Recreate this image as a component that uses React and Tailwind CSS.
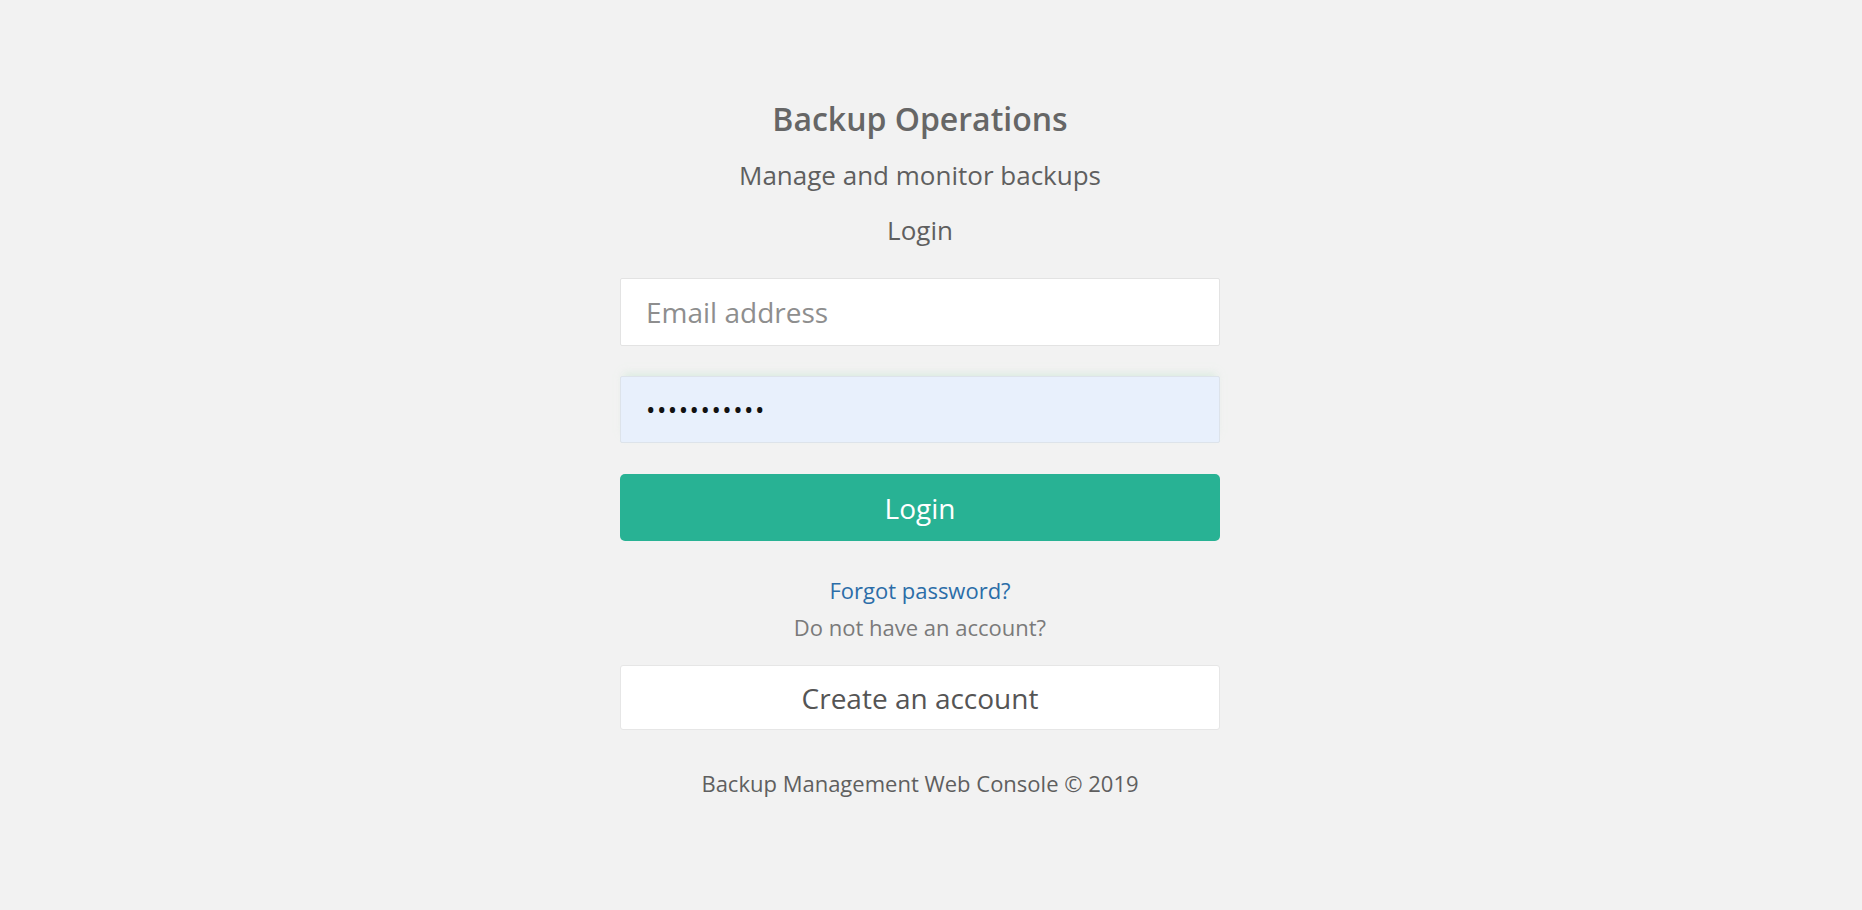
import React from "react";

export default function App() {
  return (
    <div
      className="min-h-[910px] w-full bg-[#f2f2f2]"
      style={{ fontFamily: '"Open Sans", "Noto Sans", sans-serif' }}
    >
      <div className="ml-[620px] w-[600px] flex flex-col items-center pt-[97px]">
        <h1 className="text-[32px] font-semibold text-[#666666] leading-[44px]">Backup Operations</h1>
        <p className="mt-[16px] text-[26px] text-[#5f5f5f] leading-[36px]">Manage and monitor backups</p>
        <p className="mt-[19px] text-[26px] text-[#5f5f5f] leading-[36px]">Login</p>

        <div className="mt-[30px] w-full h-[68px] bg-white border border-[#e3e3e3] rounded-[2px] flex items-center px-[25px]">
          <span className="text-[28px] text-[#8e8e8e]">Email address</span>
        </div>
        <div className="mt-[30px] w-full h-[67px] bg-[#e8f0fc] border border-[#dde3ea] rounded-[2px] flex items-center px-[25px] shadow-[0_-6px_8px_-4px_rgba(200,230,210,0.6)]">
          <span className="text-[25px] text-[#111] tracking-[1.5px] leading-none">•••••••••••</span>
        </div>

        <button className="mt-[31px] w-full h-[67px] bg-[#28b294] rounded-[5px] text-white text-[28px] flex items-center justify-center">
          Login
        </button>

        <a className="mt-[33px] text-[22px] text-[#2b6da8] leading-[32px]">Forgot password?</a>
        <p className="mt-[5px] text-[22px] text-[#7a7a7a] leading-[32px]">Do not have an account?</p>

        <button className="mt-[22px] w-full h-[65px] bg-white border border-[#e6e6e6] rounded-[3px] text-[28px] text-[#555555] flex items-center justify-center">
          Create an account
        </button>

        <p className="mt-[37px] text-[22px] text-[#5f5f5f] leading-[32px]">Backup Management Web Console © 2019</p>
      </div>
    </div>
  );
}
